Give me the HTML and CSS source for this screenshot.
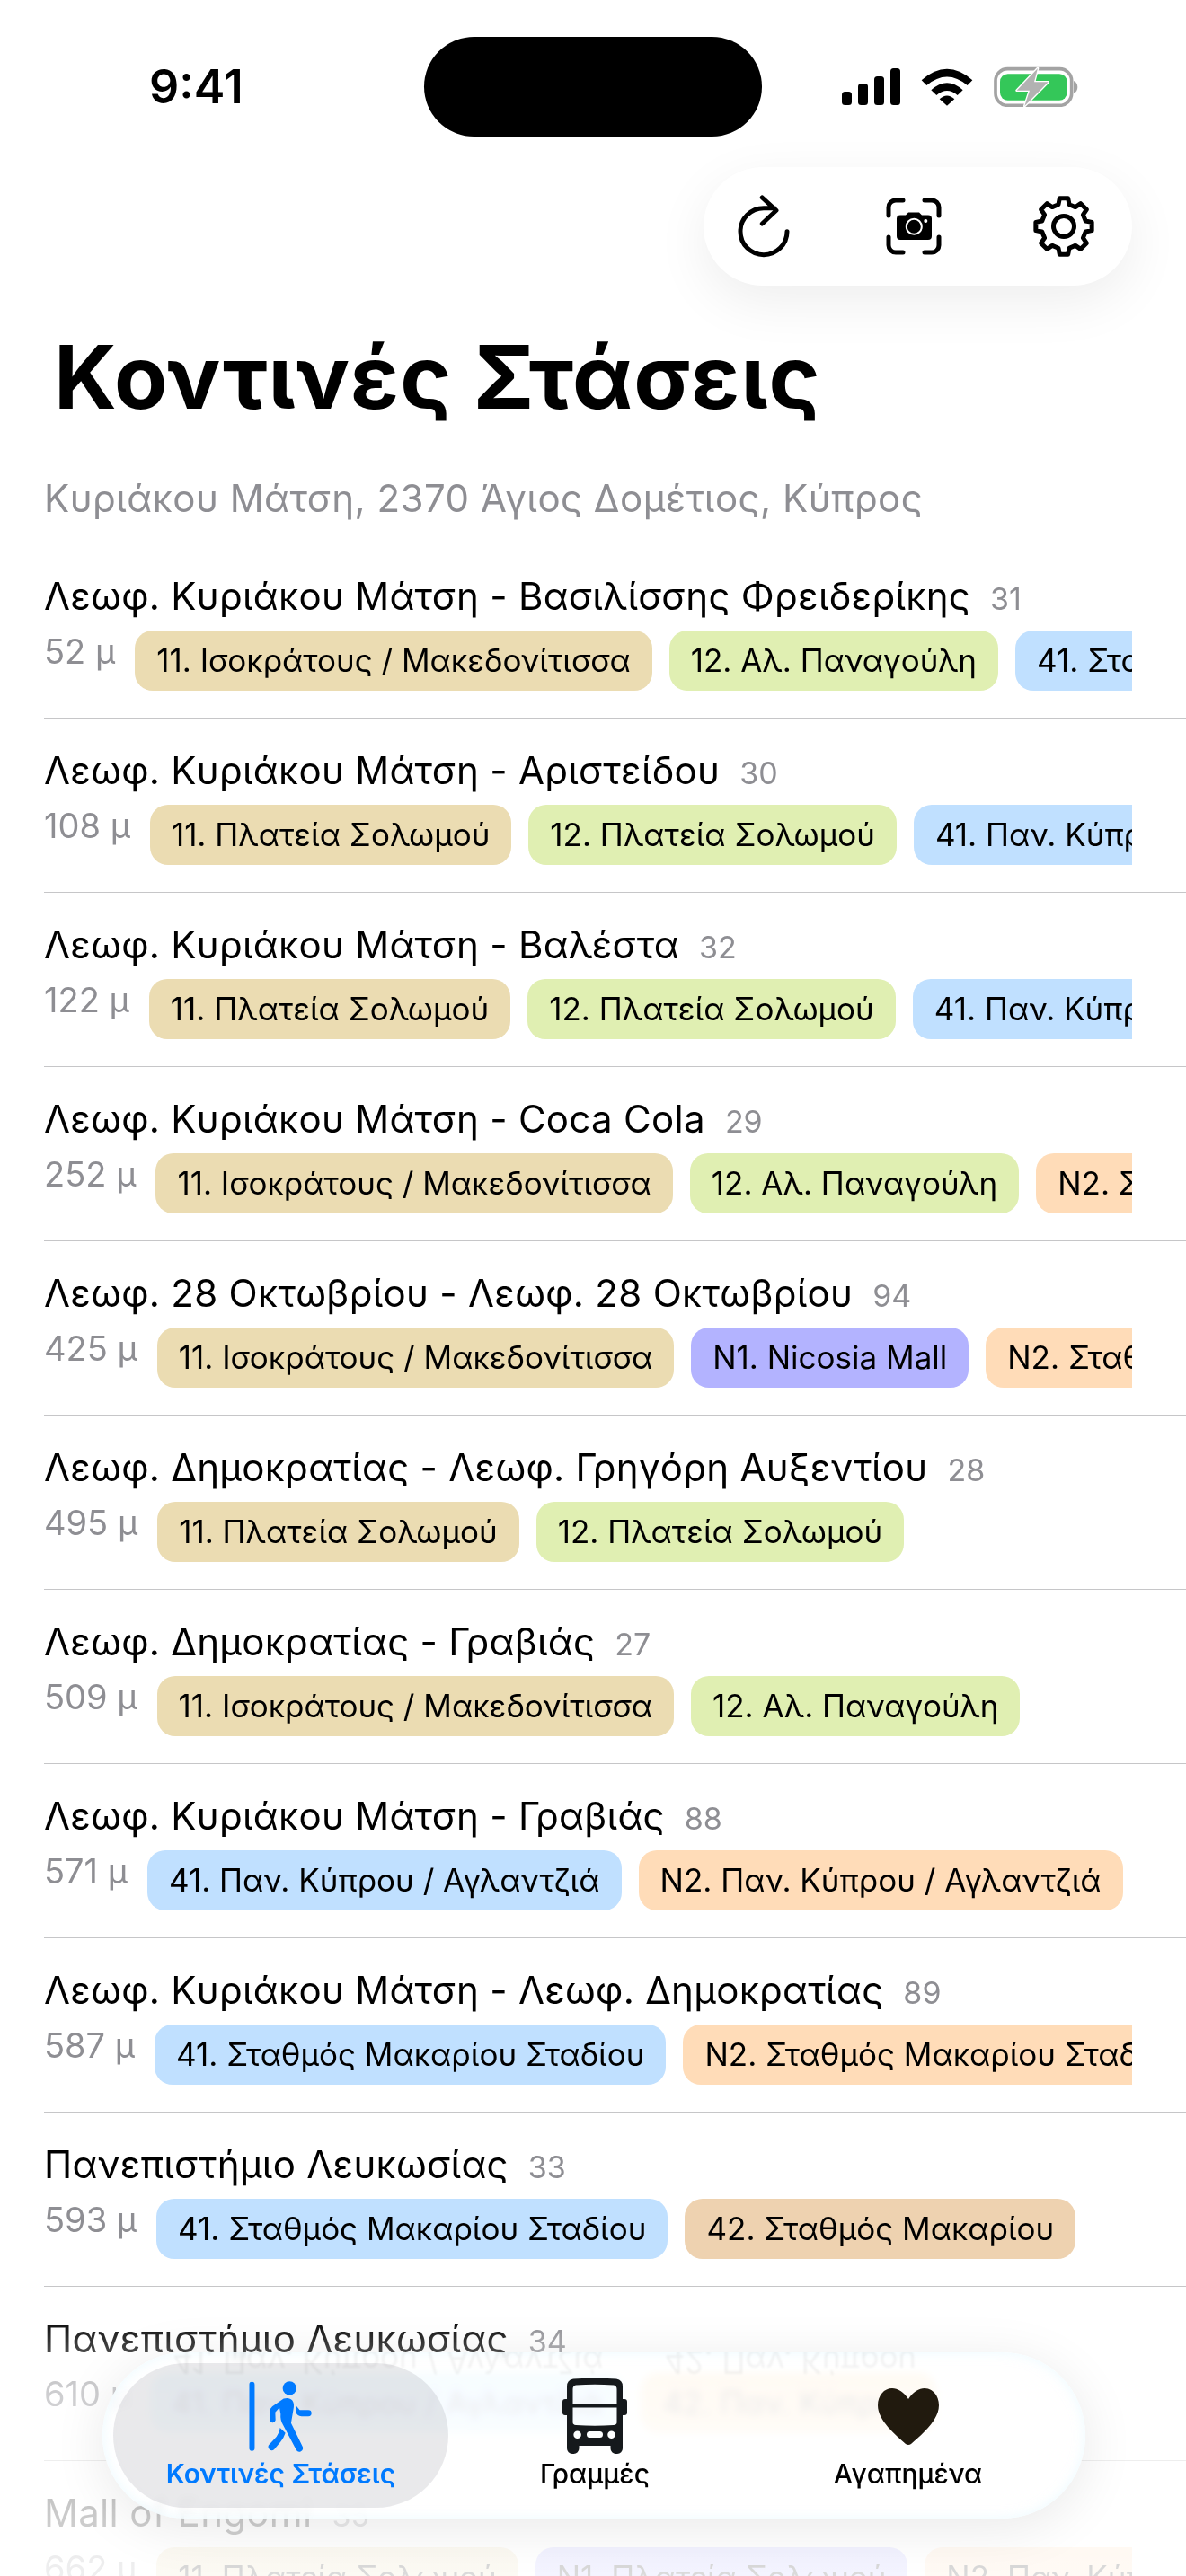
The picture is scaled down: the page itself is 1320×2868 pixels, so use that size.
FILE: index.html
```html
<!DOCTYPE html>
<html lang="el">
<head>
<meta charset="utf-8">
<title>Κοντινές Στάσεις</title>
<link rel="stylesheet" href="styles.css">
</head>
<body>
<div class="screen">
  <header class="status">
    <div class="status-left"><span class="time">9:41</span></div>
    <div class="island"></div>
    <div class="status-right">
      <svg class="ic-signal" viewBox="0 0 65 41" width="65" height="41"><rect x="0" y="26" width="11" height="15" rx="3.5"/><rect x="18" y="17" width="11" height="24" rx="3.5"/><rect x="36" y="9" width="11" height="32" rx="3.5"/><rect x="54" y="0" width="11" height="41" rx="3.5"/></svg>
      <svg class="ic-wifi" viewBox="430 72 180 132" width="60" height="44"><path d="M435 115Q520 40 605 115L588 132Q520 75 452 132Z"/><path d="M467 148Q520 100 573 148L555 165Q520 135 485 165Z"/><path d="M495 178Q520 155 545 178L520 200Z"/></svg>
      <svg class="ic-battery" viewBox="675 70 285 135" width="95" height="45"><rect x="681" y="78" width="254" height="122" rx="40" fill="none" stroke="#a3a3a3" stroke-width="11"/><rect x="696" y="95" width="224" height="88" rx="26" fill="#34c759"/><path d="M942 118Q955 124 955 139Q955 154 942 160Z" fill="#a3a3a3"/><path d="M822 76L752 150L795 150L778 202L857 122L810 122Z" fill="#b2b2b2" stroke="#fff" stroke-width="8" stroke-linejoin="round" paint-order="stroke"/></svg>
    </div>
  </header>

  <nav class="toolbar">
    <svg class="tool" viewBox="0 0 70 72" width="70" height="72"><path d="M61 41.7A26 26 0 1 1 35 15.7H47M33.3 4L49 18.3L33.3 33" fill="none" stroke="#000" stroke-width="5" stroke-linecap="round" stroke-linejoin="round"/></svg>
    <svg class="tool" viewBox="0 0 70 72" width="70" height="72"><path d="M7 24V15A8 8 0 0 1 15 7H23M47 7H55A8 8 0 0 1 63 15V24M63 48V57A8 8 0 0 1 55 65H47M23 65H15A8 8 0 0 1 7 57V48" fill="none" stroke="#000" stroke-width="5" stroke-linecap="round"/><path d="M20 23.5H26L29 20.5H41L44 23.5H51A4 4 0 0 1 55 27.5V47A4 4 0 0 1 51 51H20A4 4 0 0 1 16 47V27.5A4 4 0 0 1 20 23.5Z"/><circle cx="35.3" cy="36.3" r="8.5" fill="none" stroke="#fff" stroke-width="2"/><circle cx="48.3" cy="30" r="2" fill="#fff"/></svg>
    <svg class="tool" viewBox="0 0 70 72" width="70" height="72"><g transform="translate(35 36)" fill="none" stroke="#000" stroke-width="5" stroke-linejoin="round"><polygon points="-6.05,-24.26 -4.66,-31.15 4.66,-31.15 6.05,-24.26 12.88,-21.43 18.74,-25.32 25.32,-18.74 21.43,-12.88 24.26,-6.05 31.15,-4.66 31.15,4.66 24.26,6.05 21.43,12.88 25.32,18.74 18.74,25.32 12.88,21.43 6.05,24.26 4.66,31.15 -4.66,31.15 -6.05,24.26 -12.88,21.43 -18.74,25.32 -25.32,18.74 -21.43,12.88 -24.26,6.05 -31.15,4.66 -31.15,-4.66 -24.26,-6.05 -21.43,-12.88 -25.32,-18.74 -18.74,-25.32 -12.88,-21.43"/><circle r="11.5"/></g></svg>
  </nav>

  <h1 class="page-title">Κοντινές Στάσεις</h1>
  <p class="address">Κυριάκου Μάτση, 2370 Άγιος Δομέτιος, Κύπρος</p>

  <ul class="stops">
    <li class="stop">
      <div class="stop-name">Λεωφ. Κυριάκου Μάτση - Βασιλίσσης Φρειδερίκης<span class="stop-code">31</span></div>
      <div class="stop-meta"><span class="dist">52 μ</span><div class="chips"><span class="chip tan">11. Ισοκράτους / Μακεδονίτισσα</span><span class="chip green">12. Αλ. Παναγούλη</span><span class="chip blue">41. Σταθμός Μακαρίου Σταδίου</span></div></div>
    </li>
    <li class="stop">
      <div class="stop-name">Λεωφ. Κυριάκου Μάτση - Αριστείδου<span class="stop-code">30</span></div>
      <div class="stop-meta"><span class="dist">108 μ</span><div class="chips"><span class="chip tan">11. Πλατεία Σολωμού</span><span class="chip green">12. Πλατεία Σολωμού</span><span class="chip blue">41. Παν. Κύπρου / Αγλαντζιά</span></div></div>
    </li>
    <li class="stop">
      <div class="stop-name">Λεωφ. Κυριάκου Μάτση - Βαλέστα<span class="stop-code">32</span></div>
      <div class="stop-meta"><span class="dist">122 μ</span><div class="chips"><span class="chip tan">11. Πλατεία Σολωμού</span><span class="chip green">12. Πλατεία Σολωμού</span><span class="chip blue">41. Παν. Κύπρου / Αγλαντζιά</span></div></div>
    </li>
    <li class="stop">
      <div class="stop-name">Λεωφ. Κυριάκου Μάτση - Coca Cola<span class="stop-code">29</span></div>
      <div class="stop-meta"><span class="dist">252 μ</span><div class="chips"><span class="chip tan">11. Ισοκράτους / Μακεδονίτισσα</span><span class="chip green">12. Αλ. Παναγούλη</span><span class="chip orange">N2. Σταθμός Μακαρίου Σταδίου</span></div></div>
    </li>
    <li class="stop">
      <div class="stop-name">Λεωφ. 28 Οκτωβρίου - Λεωφ. 28 Οκτωβρίου<span class="stop-code">94</span></div>
      <div class="stop-meta"><span class="dist">425 μ</span><div class="chips"><span class="chip tan">11. Ισοκράτους / Μακεδονίτισσα</span><span class="chip purple">N1. Nicosia Mall</span><span class="chip orange">N2. Σταθμός Μακαρίου Σταδίου</span></div></div>
    </li>
    <li class="stop">
      <div class="stop-name">Λεωφ. Δημοκρατίας - Λεωφ. Γρηγόρη Αυξεντίου<span class="stop-code">28</span></div>
      <div class="stop-meta"><span class="dist">495 μ</span><div class="chips"><span class="chip tan">11. Πλατεία Σολωμού</span><span class="chip green">12. Πλατεία Σολωμού</span></div></div>
    </li>
    <li class="stop">
      <div class="stop-name">Λεωφ. Δημοκρατίας - Γραβιάς<span class="stop-code">27</span></div>
      <div class="stop-meta"><span class="dist">509 μ</span><div class="chips"><span class="chip tan">11. Ισοκράτους / Μακεδονίτισσα</span><span class="chip green">12. Αλ. Παναγούλη</span></div></div>
    </li>
    <li class="stop">
      <div class="stop-name">Λεωφ. Κυριάκου Μάτση - Γραβιάς<span class="stop-code">88</span></div>
      <div class="stop-meta"><span class="dist">571 μ</span><div class="chips"><span class="chip blue">41. Παν. Κύπρου / Αγλαντζιά</span><span class="chip orange">N2. Παν. Κύπρου / Αγλαντζιά</span></div></div>
    </li>
    <li class="stop">
      <div class="stop-name">Λεωφ. Κυριάκου Μάτση - Λεωφ. Δημοκρατίας<span class="stop-code">89</span></div>
      <div class="stop-meta"><span class="dist">587 μ</span><div class="chips"><span class="chip blue">41. Σταθμός Μακαρίου Σταδίου</span><span class="chip orange">N2. Σταθμός Μακαρίου Σταδίου</span></div></div>
    </li>
    <li class="stop">
      <div class="stop-name">Πανεπιστήμιο Λευκωσίας<span class="stop-code">33</span></div>
      <div class="stop-meta"><span class="dist">593 μ</span><div class="chips"><span class="chip blue">41. Σταθμός Μακαρίου Σταδίου</span><span class="chip brown">42. Σταθμός Μακαρίου</span></div></div>
    </li>
    <li class="stop">
      <div class="stop-name">Πανεπιστήμιο Λευκωσίας<span class="stop-code">34</span></div>
      <div class="stop-meta"><span class="dist">610 μ</span><div class="chips"><span class="chip blue">41. Παν. Κύπρου / Αγλαντζιά</span><span class="chip brown">42. Παν. Κύπρου</span></div></div>
    </li>
    <li class="stop">
      <div class="stop-name">Mall of Engomi<span class="stop-code">35</span></div>
      <div class="stop-meta"><span class="dist">662 μ</span><div class="chips"><span class="chip tan">11. Πλατεία Σολωμού</span><span class="chip purple">N1. Πλατεία Σολωμού</span><span class="chip orange">N2. Παν. Κύπρου / Αγλαντζιά</span></div></div>
    </li>
  </ul>

  <div class="bottom-fade"></div>

  <nav class="tabbar">
    <div class="tab-refraction" aria-hidden="true"><span>41. Παν. Κύπρου / Αγλαντζιά</span><span>42. Παν. Κύπρου</span></div>
    <a class="tab tab-active">
      <span class="tab-icon">
        <svg viewBox="530 145 225 250" width="75" height="83" fill="#007aff"><rect x="537" y="153" width="18" height="232" rx="9"/><circle cx="672" cy="175" r="23"/><path d="M652 210C672 203 689 214 686 238L677 292L716 372A12 12 0 0 1 695 383L650 298Q640 282 642 262L638 240L624 256L625 282A10 10 0 0 1 606 284L606 252Q606 243 614 236Z"/><path d="M640 308L658 325Q652 343 642 354L620 381A12 12 0 0 1 602 366L628 338Q638 326 640 308Z"/><path d="M693 232L706 248H735A10 10 0 0 1 735 269H712Q696 268 694 255Z"/></svg>
      </span>
      <span class="tab-label">Κοντινές Στάσεις</span>
    </a>
    <a class="tab">
      <span class="tab-icon">
        <svg viewBox="0 0 72 84" width="72" height="84" fill="#15191c"><path fill-rule="evenodd" d="M12 0.5Q36 -1 60 0.5Q67 1.5 67 9V23H69Q72 23 72 26V38Q72 41 69 41H67V78A6 6 0 0 1 61 84H59.5A6 6 0 0 1 53.5 78V75H18.5V78A6 6 0 0 1 12.5 84H11A6 6 0 0 1 5 78V41H3Q0 41 0 38V26Q0 23 3 23H5V9Q5 1.500 12 0.500ZM15 7.500Q36 6 57 7.500Q60.500 8 60.500 12V28H11.500V12Q11.500 8 15 7.500ZM11.500 32.500H60.500V49Q60.500 51.500 57 52Q36 53.500 15 52Q11.500 51.500 11.500 49ZM16.600 58.500A4.200 4.200 0 1 0 16.601 67A4.200 4.200 0 1 0 16.600 58.500ZM54.500 58.500A4.200 4.200 0 1 0 54.501 67A4.200 4.200 0 1 0 54.500 58.500ZM30.500 59A3.500 3.500 0 0 0 30.500 66H41.500A3.500 3.500 0 0 0 41.500 59Z"/></svg>
      </span>
      <span class="tab-label">Γραμμές</span>
    </a>
    <a class="tab">
      <span class="tab-icon">
        <svg viewBox="0 0 68 63" width="68" height="63" fill="#211a0e"><path d="M34 12C29 4 22 0 16 0C7 0 0 8 0 19C0 36 20 52 31 62Q34 64 37 62C48 52 68 36 68 19C68 8 61 0 52 0C46 0 39 4 34 12Z"/></svg>
      </span>
      <span class="tab-label">Αγαπημένα</span>
    </a>
  </nav>
</div>
</body>
</html>
```
FILE: styles.css
```css
* { box-sizing: border-box; }

html, body { margin: 0; padding: 0; background: #fff; }

.screen {
  position: relative;
  width: 1320px;
  height: 2868px;
  padding-top: 41px;
  overflow: hidden;
  background: #fff;
  color: #000;
  font-family: Inter, "Noto Sans", sans-serif;
}

/* status bar */
.status {
  display: grid;
  grid-template-columns: 472px 376px 1fr;
  align-items: center;
  height: 111px;
}
.status-left, .status-right { display: flex; align-items: center; height: 111px; }
.status-left { padding-left: 166px; }
.status-right { padding-left: 89px; gap: 22px; }
.time { font-size: 52px; font-weight: 600; line-height: 1; }
.island { height: 111px; border-radius: 56px; background: #000; }
.ic-signal, .ic-wifi { fill: #000; }

/* floating tool pill */
.toolbar {
  position: relative;
  display: flex;
  align-items: center;
  gap: 97px;
  width: 477px;
  height: 132px;
  margin: 34px 60px 0 auto;
  padding: 0 40px 0 32px;
  border-radius: 66px;
  background: #fff;
  box-shadow: 0 18px 60px rgba(0, 0, 0, 0.07);
}
.tool { flex: none; }

/* headings */
.page-title {
  margin: 46px 0 0 60px;
  font-size: 97px;
  line-height: 112px;
  font-weight: 700;
  letter-spacing: 1px;
  white-space: nowrap;
}
.address {
  margin: 54px 0 0 49px;
  font-size: 42px;
  line-height: 50px;
  letter-spacing: 0.5px;
  color: #8e8e93;
  white-space: nowrap;
}

/* stop list */
.stops { list-style: none; margin: 26px 0 0 49px; padding: 0; }
.stop {
  height: 194px;
  padding-top: 33px;
  border-bottom: 1px solid #c6c6c8;
}
.stop-name {
  display: flex;
  align-items: baseline;
  gap: 22px;
  height: 50px;
  font-size: 42px;
  line-height: 50px;
  letter-spacing: 0.3px;
  white-space: nowrap;
}
.stop-code { font-size: 34px; letter-spacing: 0; color: #8e8e93; }
.stop-meta {
  display: flex;
  align-items: flex-start;
  gap: 22px;
  margin: 13px 60px 0 0;
}
.dist {
  flex: none;
  margin-top: 1px;
  font-size: 38px;
  line-height: 45px;
  color: #8e8e93;
}
.chips { display: flex; gap: 19px; min-width: 0; overflow: hidden; }
.chip {
  flex: none;
  height: 67px;
  padding: 0 24px;
  border-radius: 20px;
  font-size: 35px;
  line-height: 67px;
  white-space: nowrap;
}
.tan { background: #ebdcb2; }
.green { background: #e0efb2; }
.blue { background: #c0e0ff; }
.orange { background: #ffdcb8; }
.purple { background: #b3b3ff; }
.brown { background: #eed2b0; }

/* content dissolves towards the screen bottom */
.bottom-fade {
  position: absolute;
  left: 0;
  right: 0;
  bottom: 0;
  height: 290px;
  background: linear-gradient(to bottom, rgba(255,255,255,0), rgba(255,255,255,0.25) 12%, rgba(255,255,255,0.55) 27%, rgba(255,255,255,0.78) 72%, rgba(255,255,255,0.86));
}

/* glass tab bar */
.tabbar {
  position: absolute;
  left: 114px;
  top: 2619px;
  width: 1094px;
  height: 185px;
  padding: 12px;
  display: grid;
  grid-template-columns: 373px 326px 1fr;
  border-radius: 93px;
  overflow: hidden;
  background: rgba(255, 255, 255, 0.8);
  box-shadow: 0 10px 60px rgba(0, 0, 0, 0.09), inset 0 0 14px rgba(200, 240, 255, 0.35);
  -webkit-backdrop-filter: blur(5px) saturate(2);
  backdrop-filter: blur(5px) saturate(2);
}
.tab-refraction {
  position: absolute;
  left: 78px;
  top: -14px;
  display: flex;
  gap: 68px;
  font-size: 35px;
  line-height: 50px;
  white-space: nowrap;
  color: rgba(0, 0, 0, 0.05);
  transform: scaleY(-1);
  filter: blur(1px);
}
.tab {
  position: relative;
  display: flex;
  flex-direction: column;
  align-items: center;
  padding-top: 17px;
  border-radius: 81px;
  color: #000;
}
.tab-active { background: rgba(118, 118, 128, 0.16); color: #007aff; }
.tab-icon { display: flex; align-items: center; justify-content: center; height: 84px; }
.tab-label { margin-top: 4px; font-size: 30px; line-height: 36px; font-weight: 500; }
.tab-active .tab-label { font-weight: 600; }
```
